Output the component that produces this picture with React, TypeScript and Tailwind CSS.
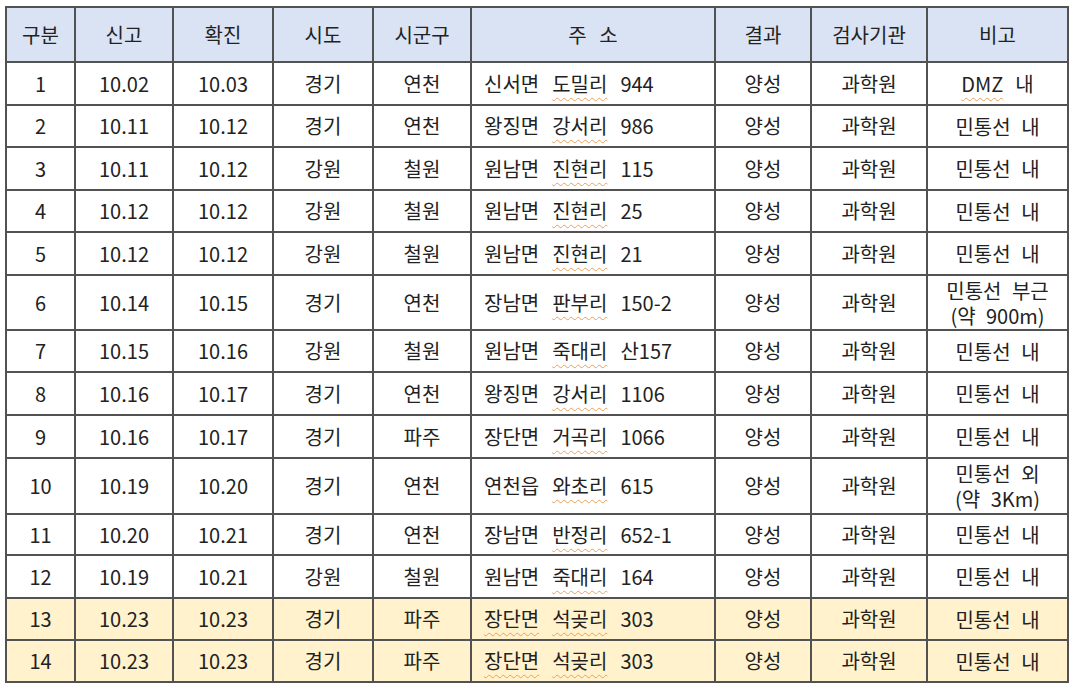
import React from 'react'

type Row = {
  no: string
  report: string
  confirm: string
  sido: string
  sigungu: string
  addr: [string, boolean][]
  note: string[]
  noteMark?: boolean
  hl?: boolean
}

const W = (t: string): [string, boolean] => [t, true]
const P = (t: string): [string, boolean] => [t, false]

const ROWS: Row[] = [
  { no: '1', report: '10.02', confirm: '10.03', sido: '경기', sigungu: '연천', addr: [P('신서면'), W('도밀리'), P('944')], note: ['DMZ 내'], noteMark: true },
  { no: '2', report: '10.11', confirm: '10.12', sido: '경기', sigungu: '연천', addr: [P('왕징면'), W('강서리'), P('986')], note: ['민통선 내'] },
  { no: '3', report: '10.11', confirm: '10.12', sido: '강원', sigungu: '철원', addr: [P('원남면'), W('진현리'), P('115')], note: ['민통선 내'] },
  { no: '4', report: '10.12', confirm: '10.12', sido: '강원', sigungu: '철원', addr: [P('원남면'), W('진현리'), P('25')], note: ['민통선 내'] },
  { no: '5', report: '10.12', confirm: '10.12', sido: '강원', sigungu: '철원', addr: [P('원남면'), W('진현리'), P('21')], note: ['민통선 내'] },
  { no: '6', report: '10.14', confirm: '10.15', sido: '경기', sigungu: '연천', addr: [P('장남면'), W('판부리'), P('150-2')], note: ['민통선 부근', '(약 900m)'] },
  { no: '7', report: '10.15', confirm: '10.16', sido: '강원', sigungu: '철원', addr: [P('원남면'), W('죽대리'), P('산157')], note: ['민통선 내'] },
  { no: '8', report: '10.16', confirm: '10.17', sido: '경기', sigungu: '연천', addr: [P('왕징면'), W('강서리'), P('1106')], note: ['민통선 내'] },
  { no: '9', report: '10.16', confirm: '10.17', sido: '경기', sigungu: '파주', addr: [P('장단면'), W('거곡리'), P('1066')], note: ['민통선 내'] },
  { no: '10', report: '10.19', confirm: '10.20', sido: '경기', sigungu: '연천', addr: [P('연천읍'), W('와초리'), P('615')], note: ['민통선 외', '(약 3Km)'] },
  { no: '11', report: '10.20', confirm: '10.21', sido: '경기', sigungu: '연천', addr: [P('장남면'), W('반정리'), P('652-1')], note: ['민통선 내'] },
  { no: '12', report: '10.19', confirm: '10.21', sido: '강원', sigungu: '철원', addr: [P('원남면'), W('죽대리'), P('164')], note: ['민통선 내'] },
  { no: '13', report: '10.23', confirm: '10.23', sido: '경기', sigungu: '파주', addr: [W('장단면'), W('석곶리'), P('303')], note: ['민통선 내'], hl: true },
  { no: '14', report: '10.23', confirm: '10.23', sido: '경기', sigungu: '파주', addr: [W('장단면'), W('석곶리'), P('303')], note: ['민통선 내'], hl: true },
]

const HEAD = ['구분', '신고', '확진', '시도', '시군구', '주 소', '결과', '검사기관', '비고']

const wavy = 'underline decoration-wavy decoration-[#e9a15a] decoration-1 underline-offset-[5px]'

export default function App() {
  return (
    <div className="min-h-screen bg-white pl-[5px] pt-[6px] text-[#222] text-[20px]" style={{ fontFamily: '"Noto Sans CJK KR", "Noto Sans", sans-serif' }}>
      <div className="grid w-fit gap-[2px] p-[2px] bg-[#525252] grid-cols-[67px_96px_98px_98px_96px_242px_94px_114px_139px] grid-rows-[53px_41px_40px_41px_40px_41px_53px_40px_41px_41px_54px_39px_41px_40px_40px]">
        {HEAD.map(h => (
          <div key={h} className="flex items-center justify-center bg-[#dae3f3] [word-spacing:8px]">{h}</div>
        ))}
        {ROWS.map(r => {
          const bg = r.hl ? 'bg-[#fff2cc]' : 'bg-white'
          const cell = `flex items-center justify-center ${bg}`
          return (
            <React.Fragment key={r.no}>
              <div className={cell}>{r.no}</div>
              <div className={cell}>{r.report}</div>
              <div className={cell}>{r.confirm}</div>
              <div className={cell}>{r.sido}</div>
              <div className={cell}>{r.sigungu}</div>
              <div className={`flex items-center pl-[12px] gap-[13px] ${bg}`}>
                {r.addr.map(([t, mark], i) => (
                  <span key={i} className={mark ? wavy : ''}>{t}</span>
                ))}
              </div>
              <div className={cell}>양성</div>
              <div className={cell}>과학원</div>
              <div className={`flex flex-col items-center justify-center leading-[25px] ${bg}`}>
                {r.note.map((n, i) =>
                  r.noteMark ? (
                    <span key={i} className="flex gap-[12px]"><span className={wavy}>DMZ</span><span>내</span></span>
                  ) : (
                    <span key={i} className="[word-spacing:6px]">{n}</span>
                  )
                )}
              </div>
            </React.Fragment>
          )
        })}
      </div>
    </div>
  )
}
